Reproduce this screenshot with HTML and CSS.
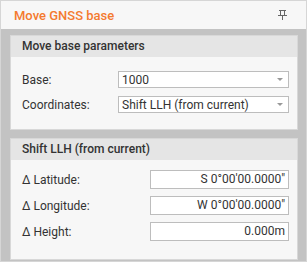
FILE: index.html
```html
<!DOCTYPE html>
<html>
<head>
<meta charset="utf-8">
<link rel="stylesheet" href="styles.css">
</head>
<body>
<div class="window">
  <div class="titlebar">
    <span class="title">Move GNSS base</span>
    <svg class="pin" width="9" height="10" viewBox="0 0 9 10"><path d="M1 0.5H8M2.5 0.5V5M6.5 0.5V5M0 5.5H9M4.5 5.5V10" stroke="#666" stroke-width="1" fill="none"/></svg>
  </div>
  <div class="content">
    <section class="panel">
      <div class="panel-header">Move base parameters</div>
      <div class="panel-body grid-a">
        <label class="lbl">Base:</label>
        <div class="select"><span>1000</span><span class="caret"></span></div>
        <label class="lbl">Coordinates:</label>
        <div class="select"><span>Shift LLH (from current)</span><span class="caret"></span></div>
      </div>
    </section>
    <section class="panel">
      <div class="panel-header">Shift LLH (from current)</div>
      <div class="panel-body grid-b">
        <label class="lbl">Δ Latitude:</label>
        <div class="input">S 0°00'00.0000"</div>
        <label class="lbl">Δ Longitude:</label>
        <div class="input">W 0°00'00.0000"</div>
        <label class="lbl">Δ Height:</label>
        <div class="input">0.000m</div>
      </div>
    </section>
  </div>
</div>
</body>
</html>
```
FILE: styles.css
```css
html, body {
  margin: 0;
  padding: 0;
  background: #ffffff;
}
body {
  font-family: Roboto, "Liberation Sans", sans-serif;
  font-size: 12px;
  color: #333;
}
.window {
  width: 307px;
  height: 262px;
  box-sizing: border-box;
  border: 1px solid #d6d6d6;
  display: flex;
  flex-direction: column;
  background: #c3c3c3;
  overflow: hidden;
}
.titlebar {
  height: 28px;
  flex: none;
  background: #f7f7f7;
  display: flex;
  align-items: center;
  justify-content: space-between;
  padding: 0 19px 0 13px;
  box-sizing: border-box;
}
.title {
  color: #f47a2f;
  font-size: 13px;
  font-weight: 500;
}
.pin {
  display: block;
}
.content {
  flex: 1;
  padding: 6px 8px 0 9px;
  display: flex;
  flex-direction: column;
  gap: 8px;
}
.panel {
  background: #f7f7f7;
  border: 1px solid #d8d8d8;
}
.panel-header {
  height: 21px;
  line-height: 21px;
  background: #e5e5e5;
  padding-left: 11px;
  font-weight: 500;
  color: #333;
}
.panel-body {
  display: grid;
  align-items: center;
  padding: 14px 8px 16px 11px;
}
.grid-a {
  grid-template-columns: 96px 1fr;
  row-gap: 8px;
}
.grid-b {
  grid-template-columns: 128px 1fr;
  row-gap: 7px;
  padding-top: 10px;
  padding-bottom: 18px;
}
.lbl {
  color: #333;
}
.select {
  height: 15px;
  border: 1px solid #bdbdbd;
  background: #fff;
  display: flex;
  align-items: center;
  justify-content: space-between;
  padding: 0 5px 0 3px;
}
.caret {
  width: 0;
  height: 0;
  border-left: 3px solid transparent;
  border-right: 3px solid transparent;
  border-top: 3px solid #999;
}
.input {
  height: 17px;
  line-height: 17px;
  border: 1px solid #bdbdbd;
  background: #fff;
  text-align: right;
  padding-right: 3px;
}
```
